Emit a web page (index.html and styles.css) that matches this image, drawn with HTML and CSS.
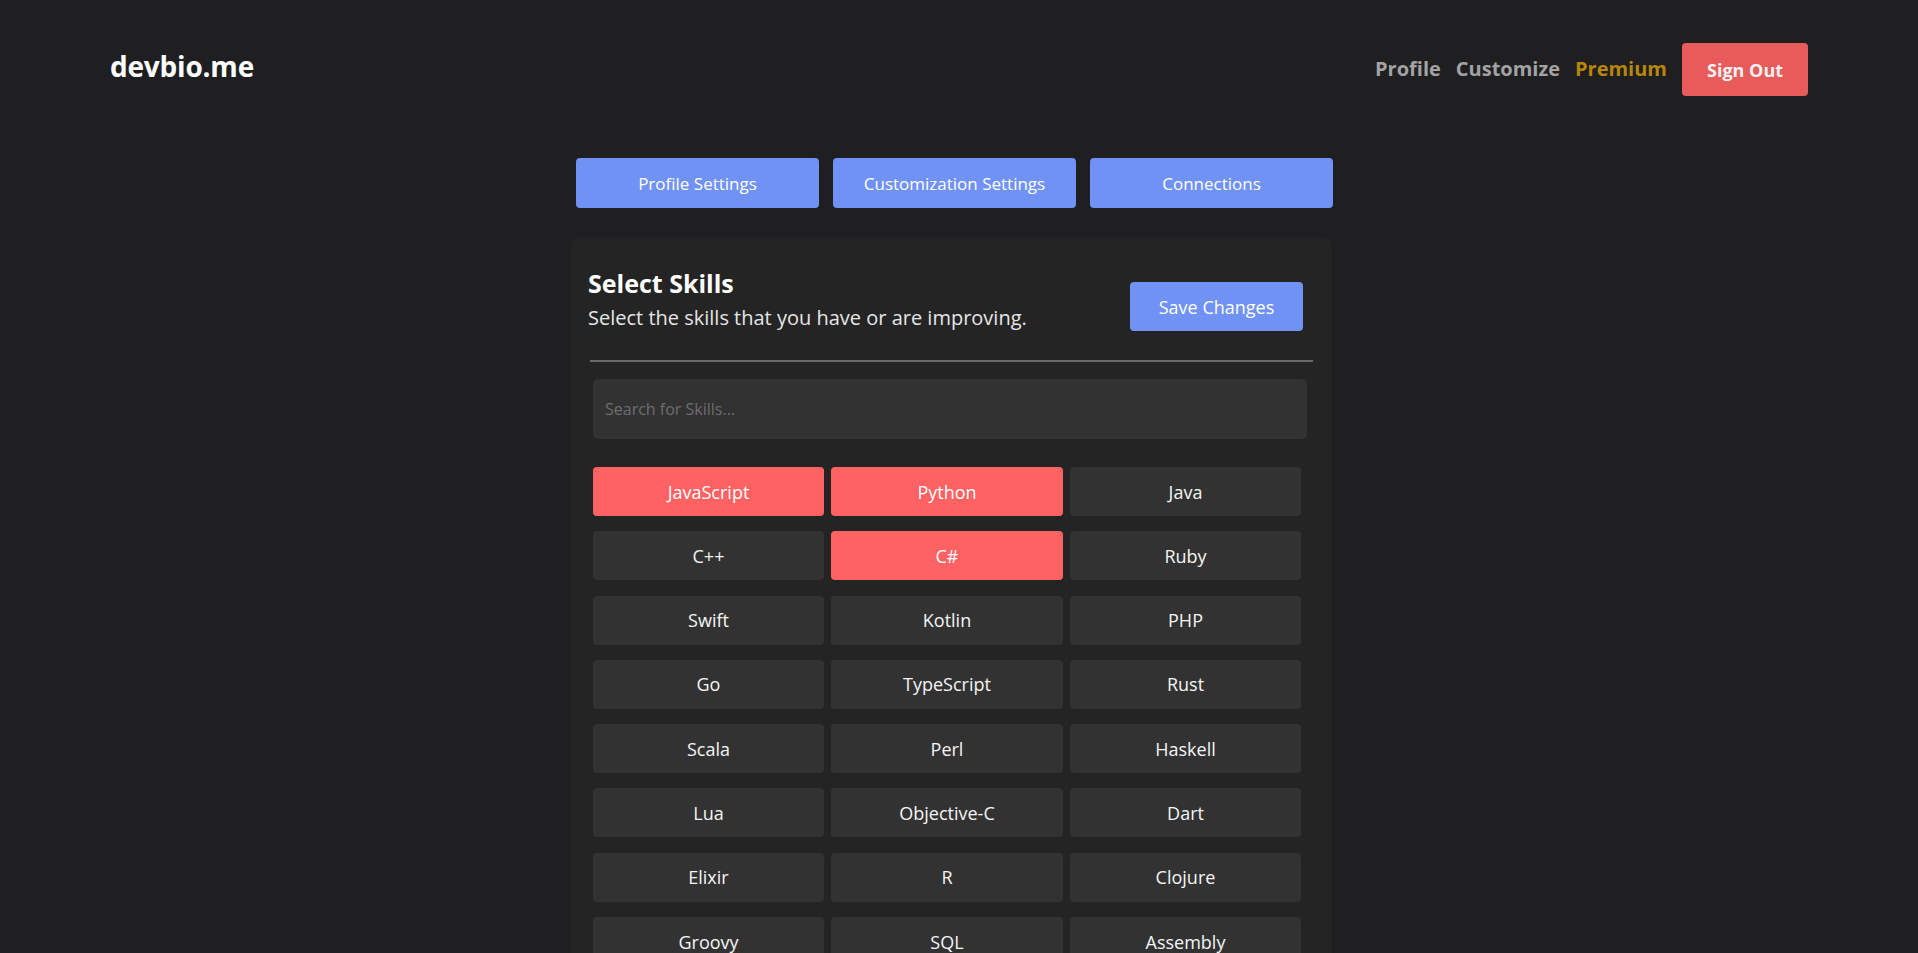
FILE: index.html
```html
<!DOCTYPE html>
<html lang="en">
<head>
<meta charset="utf-8">
<title>devbio.me - Customize</title>
<link rel="stylesheet" href="styles.css">
</head>
<body>
<header class="topbar">
  <a class="logo" href="#">devbio.me</a>
  <nav class="nav">
    <a class="nav-link" href="#">Profile</a>
    <a class="nav-link" href="#">Customize</a>
    <a class="nav-link premium" href="#">Premium</a>
    <button class="signout">Sign Out</button>
  </nav>
</header>

<main class="main">
  <div class="tabs">
    <button class="tab">Profile Settings</button>
    <button class="tab">Customization Settings</button>
    <button class="tab">Connections</button>
  </div>

  <section class="card">
    <div class="card-head">
      <div class="card-titles">
        <h1 class="card-title">Select Skills</h1>
        <p class="card-sub">Select the skills that you have or are improving.</p>
      </div>
      <button class="save">Save Changes</button>
    </div>
    <hr class="divider">
    <input class="search" type="text" placeholder="Search for Skills...">
    <div class="skills">
      <button class="skill on">JavaScript</button>
      <button class="skill on">Python</button>
      <button class="skill">Java</button>
      <button class="skill">C++</button>
      <button class="skill on">C#</button>
      <button class="skill">Ruby</button>
      <button class="skill">Swift</button>
      <button class="skill">Kotlin</button>
      <button class="skill">PHP</button>
      <button class="skill">Go</button>
      <button class="skill">TypeScript</button>
      <button class="skill">Rust</button>
      <button class="skill">Scala</button>
      <button class="skill">Perl</button>
      <button class="skill">Haskell</button>
      <button class="skill">Lua</button>
      <button class="skill">Objective-C</button>
      <button class="skill">Dart</button>
      <button class="skill">Elixir</button>
      <button class="skill">R</button>
      <button class="skill">Clojure</button>
      <button class="skill">Groovy</button>
      <button class="skill">SQL</button>
      <button class="skill">Assembly</button>
      <button class="skill">Shell</button>
      <button class="skill">PowerShell</button>
      <button class="skill">MATLAB</button>
      <button class="skill">Julia</button>
      <button class="skill">F#</button>
      <button class="skill">Visual Basic</button>
      <button class="skill">Fortran</button>
      <button class="skill">COBOL</button>
      <button class="skill">Erlang</button>
      <button class="skill">HTML</button>
      <button class="skill">CSS</button>
      <button class="skill">React</button>
      <button class="skill">Angular</button>
      <button class="skill">Vue</button>
      <button class="skill">Node.js</button>
      <button class="skill">Django</button>
      <button class="skill">Flask</button>
      <button class="skill">Spring</button>
      <button class="skill">Docker</button>
      <button class="skill">Kubernetes</button>
      <button class="skill">AWS</button>
      <button class="skill">Azure</button>
      <button class="skill">GCP</button>
      <button class="skill">Git</button>
      <button class="skill">Linux</button>
      <button class="skill">GraphQL</button>
      <button class="skill">MongoDB</button>
    </div>
  </section>
</main>
</body>
</html>
```

FILE: styles.css
```css
html {
  background: #1f1f21;
}
::-webkit-scrollbar {
  width: 8px;
}
::-webkit-scrollbar-track {
  background: #1f1f21;
}
::-webkit-scrollbar-thumb {
  background: #2a2a2b;
  border-radius: 4px;
}
body {
  margin: 0;
  background: #1f1f21;
  color: #f5f5f5;
  font-family: "Open Sans", "Liberation Sans", sans-serif;
}
button, input {
  font-family: inherit;
}

.topbar {
  display: flex;
  justify-content: space-between;
  align-items: flex-start;
  padding: 43px 110px 0 110px;
}
.logo {
  color: #ffffff;
  text-decoration: none;
  font-size: 28px;
  font-weight: 700;
  line-height: 47px;
  letter-spacing: -0.2px;
}
.nav {
  display: flex;
  align-items: flex-start;
  gap: 15px;
}
.nav-link {
  color: #a3a3a3;
  text-decoration: none;
  font-size: 20px;
  font-weight: 700;
  line-height: 52px;
}
.nav-link.premium {
  color: #b8860b;
}
.signout {
  height: 53px;
  width: 126px;
  border: none;
  border-radius: 4px;
  background: #e85b5b;
  color: #f2f2f2;
  font-size: 18px;
  font-weight: 700;
  padding: 0;
}

.main {
  width: 776px;
  margin: 62px auto 40px;
}
.tabs {
  display: flex;
  gap: 14px;
  margin-left: 5px;
  width: 757px;
}
.tab {
  flex: 1;
  height: 50px;
  border: none;
  border-radius: 4px;
  background: #7092f5;
  color: #ffffff;
  font-size: 17px;
  padding: 0;
}

.card {
  margin-top: 30px;
  width: 761px;
  box-sizing: border-box;
  background: #242424;
  border-radius: 7px;
  padding: 28px 19px 30px 17px;
}
.card-head {
  display: flex;
  justify-content: space-between;
  align-items: flex-start;
}
.card-title {
  margin: 0 0 4px 0;
  font-size: 25px;
  font-weight: 700;
  line-height: 34px;
  color: #ffffff;
}
.card-sub {
  margin: 0;
  font-size: 20px;
  line-height: 27px;
  color: #e6e6e6;
}
.save {
  margin-top: 16px;
  margin-right: 10px;
  width: 173px;
  height: 49px;
  border: none;
  border-radius: 4px;
  background: #7092f5;
  color: #ffffff;
  font-size: 18px;
  padding: 0;
}
.divider {
  margin: 29px 0 0 2px;
  border: none;
  height: 2px;
  background: #6a6a6a;
}
.search {
  display: block;
  margin: 17px 0 0 5px;
  width: 714px;
  height: 60px;
  box-sizing: border-box;
  border: none;
  border-radius: 5px;
  background: #323232;
  color: #ffffff;
  padding: 0 12px;
  font-size: 16px;
  outline: none;
}
.search::placeholder {
  color: #6e6e6e;
}
.skills {
  margin: 28px 0 0 5px;
  width: 708px;
  display: grid;
  grid-template-columns: 231px 232px 231px;
  column-gap: 7px;
  row-gap: 15.3px;
}
.skill {
  height: 49px;
  border: none;
  border-radius: 4px;
  background: #323232;
  color: #f5f5f5;
  font-size: 18px;
  padding: 0;
}
.skill.on {
  background: #fe6262;
  color: #ffffff;
}
```
